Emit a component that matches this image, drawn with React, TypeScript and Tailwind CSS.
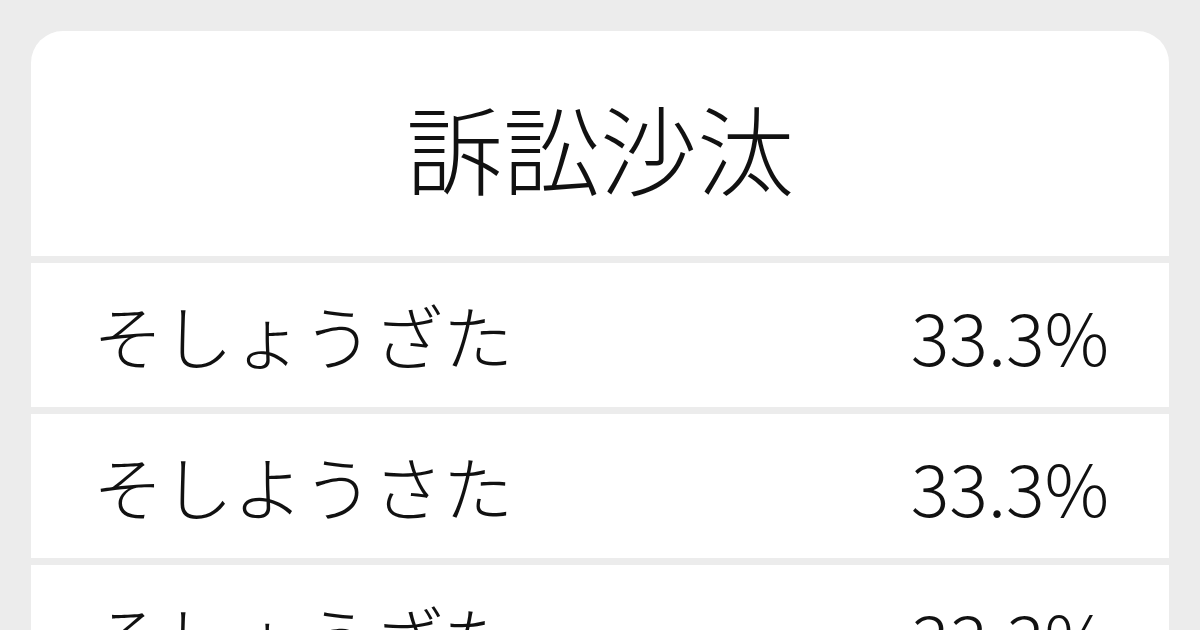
const ROWS = [
  { reading: "そしょうざた", ratio: "33.3%" },
  { reading: "そしようさた", ratio: "33.3%" },
  { reading: "そしょうざた", ratio: "33.3%" },
];

const FONT = { fontFamily: '"Noto Sans CJK JP", "Noto Sans", sans-serif' };

export default function App() {
  return (
    <div className="w-[1200px] h-[630px] overflow-hidden bg-[#ececec] px-[31px] pt-[31px]" style={FONT}>
      <div className="flex flex-col gap-[7px] rounded-[32px] overflow-hidden">
        <div className="h-[225px] bg-white flex items-center justify-center pt-[4px]">
          <h1 className="text-[97px] font-light leading-none text-[#111]">訴訟沙汰</h1>
        </div>
        {ROWS.map((row, i) => (
          <div key={i} className="h-[144px] bg-white flex items-center justify-between pl-[62px] pr-[60px]">
            <span className="text-[70px] font-light leading-none text-[#111]">{row.reading}</span>
            <span className="text-[72px] font-light leading-none text-[#111]">{row.ratio}</span>
          </div>
        ))}
      </div>
    </div>
  );
}
